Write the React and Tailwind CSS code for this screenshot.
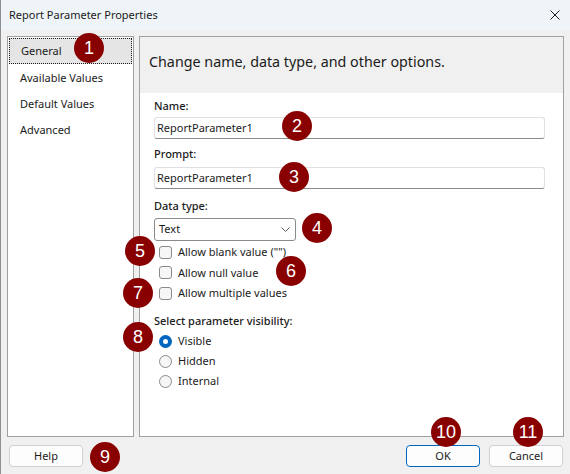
import React from 'react'

const FONT = { fontFamily: '"Noto Sans", "Segoe UI", sans-serif' }

function Badge({ n, x, y }) {
  return (
    <div
      className="absolute flex items-center justify-center rounded-full bg-[#880000] text-white text-[18px] leading-none w-[30px] h-[30px]"
      style={{ left: x - 15, top: y - 15, fontFamily: '"Liberation Sans", Arial, sans-serif' }}
    >
      {n}
    </div>
  )
}

function Checkbox({ label }) {
  return (
    <div className="flex items-center h-[20.5px] pl-[5px]">
      <span className="w-[13px] h-[13px] rounded-[3px] border border-[#8a8a8a] bg-[#f6f6f6]" />
      <span className="ml-[6px] text-[11px] text-[#1b1b1b]">{label}</span>
    </div>
  )
}

function Radio({ label, checked }) {
  return (
    <div className="flex items-center h-[20px] pl-[5px]">
      {checked ? (
        <span className="w-[13px] h-[13px] rounded-full bg-[#0067c0] flex items-center justify-center">
          <span className="w-[5px] h-[5px] rounded-full bg-white" />
        </span>
      ) : (
        <span className="w-[13px] h-[13px] rounded-full border border-[#8a8a8a] bg-[#f6f6f6]" />
      )}
      <span className="ml-[6px] text-[11px] text-[#1b1b1b]">{label}</span>
    </div>
  )
}

function Field({ value }) {
  return (
    <div className="h-[22px] mr-[4px] flex items-center border border-[#e0e0e0] border-b-[#8a8a8a] rounded-[3px] bg-white px-[2px] text-[11px] text-[#1b1b1b]">
      {value}
    </div>
  )
}

export default function App() {
  const items = ['General', 'Available Values', 'Default Values', 'Advanced']
  return (
    <div className="relative w-[570px] h-[474px] bg-[#f0f0f0] flex flex-col overflow-hidden border-l border-[#8f8f8f]" style={FONT}>
      {/* title bar */}
      <div className="h-[30px] bg-[#eff4f9] flex items-center justify-between pl-[8px] pr-[10px]">
        <span className="text-[11px] text-[#1b1b1b]">Report Parameter Properties</span>
        <svg width="10" height="10" viewBox="0 0 10 10">
          <path d="M0.5 0.5 L9.5 9.5 M9.5 0.5 L0.5 9.5" stroke="#1b1b1b" strokeWidth="1" />
        </svg>
      </div>

      <div className="flex gap-[5px] pl-[6px] pr-[6px] pt-[6px] h-[407px]">
        {/* left nav */}
        <div className="w-[127px] h-[401px] bg-white border border-[#a0a0a0] pt-[1px] px-[1px]">
          {items.map((it, i) => (
            <div
              key={it}
              className={`h-[26px] flex items-center pl-[11px] text-[11px] text-[#1b1b1b] ${
                i === 0 ? 'bg-[#e5e5e5] border border-dotted border-[#1b1b1b] pl-[10px] h-[25px] mb-[1px]' : ''
              }`}
            >
              {it}
            </div>
          ))}
        </div>

        {/* right panel */}
        <div className="w-[425px] h-[401px] bg-white border border-[#a0a0a0] flex flex-col">
          <div className="h-[56px] bg-[#f0f0f0] flex items-center pl-[9px] pb-[6px] text-[14.3px] text-[#1b1b1b]">
            Change name, data type, and other options.
          </div>
          <div className="pl-[14px] pr-[14px] pt-[5px]">
            <div className="text-[11px] text-[#1b1b1b] h-[16px] leading-[16px] font-medium">Name:</div>
            <div className="mt-[3px]">
              <Field value="ReportParameter1" />
            </div>
            <div className="text-[11px] text-[#1b1b1b] h-[16px] leading-[16px] mt-[7px] font-medium">Prompt:</div>
            <div className="mt-[5px]">
              <Field value="ReportParameter1" />
            </div>
            <div className="text-[11px] text-[#1b1b1b] h-[16px] leading-[16px] mt-[9px] font-medium">Data type:</div>
            <div className="mt-[4px] w-[142px] h-[23px] border border-[#8a8a8a] rounded-[3px] bg-white flex items-center justify-between pl-[4px] pr-[5px] text-[11px] text-[#1b1b1b]">
              <span>Text</span>
              <svg width="9" height="6" viewBox="0 0 9 6">
                <path d="M0.5 0.5 L4.5 4.5 L8.5 0.5" fill="none" stroke="#5a5a5a" strokeWidth="1" />
              </svg>
            </div>
            <div className="mt-[1px]">
              <Checkbox label={'Allow blank value ("")'} />
              <Checkbox label="Allow null value" />
              <Checkbox label="Allow multiple values" />
            </div>
            <div className="text-[11px] text-[#1b1b1b] h-[16px] leading-[16px] mt-[9px] font-medium">Select parameter visibility:</div>
            <div className="mt-[3px]">
              <Radio label="Visible" checked />
              <Radio label="Hidden" />
              <Radio label="Internal" />
            </div>
          </div>
        </div>
      </div>

      {/* footer */}
      <div className="flex items-start justify-between pl-[8px] pr-[7px] pt-[8px]">
        <button className="w-[74px] h-[22px] rounded-[4px] border border-[#d0d0d0] bg-[#fdfdfd] text-[11px] text-[#1b1b1b]">Help</button>
        <div className="flex gap-[9px]">
          <button className="w-[74px] h-[22px] rounded-[4px] border border-[#0067c0] bg-[#fdfdfd] text-[11px] text-[#1b1b1b]">OK</button>
          <button className="w-[74px] h-[22px] rounded-[4px] border border-[#d0d0d0] bg-[#fdfdfd] text-[11px] text-[#1b1b1b]">Cancel</button>
        </div>
      </div>

      <Badge n="1" x={88} y={48} />
      <Badge n="2" x={296} y={126} />
      <Badge n="3" x={293} y={177} />
      <Badge n="4" x={316} y={228} />
      <Badge n="5" x={139} y={251} />
      <Badge n="6" x={290} y={271} />
      <Badge n="7" x={137} y={293} />
      <Badge n="8" x={137} y={337} />
      <Badge n="9" x={104} y={457} />
      <Badge n="10" x={445} y={432} />
      <Badge n="11" x={527} y={432} />
    </div>
  )
}
